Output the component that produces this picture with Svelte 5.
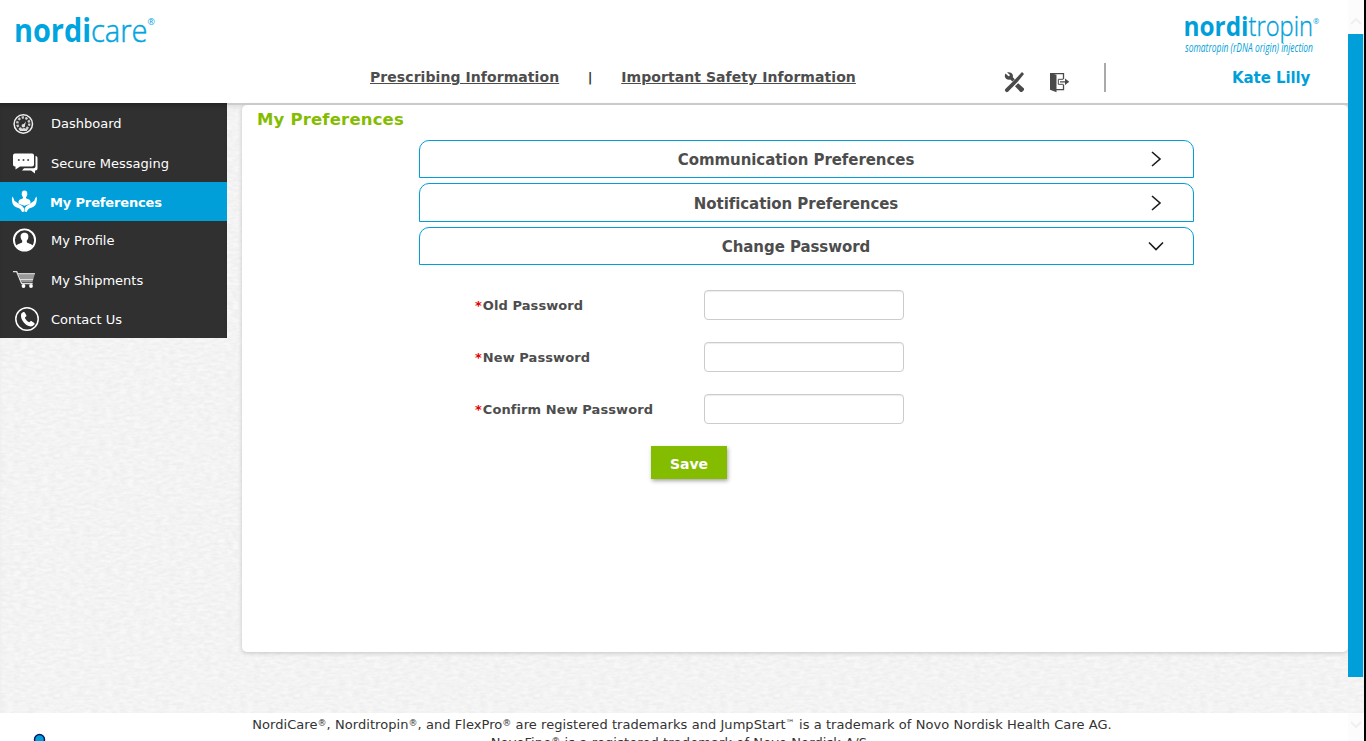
<script>
  const nav = [
    { id: 'dashboard', label: 'Dashboard' },
    { id: 'messaging', label: 'Secure Messaging' },
    { id: 'preferences', label: 'My Preferences' },
    { id: 'profile', label: 'My Profile' },
    { id: 'shipments', label: 'My Shipments' },
    { id: 'contact', label: 'Contact Us' }
  ];
  const fields = ['Old Password', 'New Password', 'Confirm New Password'];
  let active = $state('preferences');
  let open = $state('Change Password');
  const sections = ['Communication Preferences', 'Notification Preferences', 'Change Password'];
</script>

<div class="page">
  <header>
    <svg class="brand" width="160" height="60" viewBox="0 0 160 60">
      <g fill="#00a5df" font-family="Open Sans, sans-serif">
        <text x="14" y="42" font-size="31.500" font-weight="700" textLength="77" lengthAdjust="spacingAndGlyphs">nordi</text>
        <text x="91" y="42" font-size="31.500" font-weight="300" stroke="#00a5df" stroke-width=".5" textLength="56.500" lengthAdjust="spacingAndGlyphs">care</text>
        <text x="147.500" y="25" font-size="9">®</text>
      </g>
    </svg>
    <div class="links">
      <a href="#pi">Prescribing Information</a>
      <span class="bar">|</span>
      <a href="#isi">Important Safety Information</a>
    </div>
    <div class="tools">
      <svg width="22" height="22" viewBox="1003 71 22 22">
        <path d="M1005.5 73.600l3 2.700 1-.4.300-1.200-2.700-2.200c2.200-.7 4.600.2 5.500 2 .5 1 .5 1.900.2 2.800l2 2-2.300 2.300-2.300-2.200c-2 .8-4.800-.5-5.300-2.700-.2-.8 0-2 .6-3.100z" fill="#4a4a4a" />
        <path d="M1022 72l2 1.900-6.500 8.200-9.500 9.700-1.600.4-1.600-1.600.5-1.500 9.700-9.500z" fill="#4a4a4a" />
        <path d="M1015 86.200l3.200-3 5.800 5.300v1.600l-2 2h-1.600z" fill="#4a4a4a" />
      </svg>
      <svg class="exit" width="22" height="22" viewBox="1049 71 22 22">
        <path d="M1050 73l6.500 1.700v17.500l-6.500-2.500z" fill="#4a4a4a" />
        <path d="M1050 73.700h13.500v5.300M1063.500 84.500v5.200H1056" fill="none" stroke="#4a4a4a" stroke-width="1.300" />
        <path d="M1063.300 79.300h-5v5h5" fill="none" stroke="#4a4a4a" stroke-width="1" />
        <path d="M1060 81.200h5v-2.700l4.300 3.300-4.300 3.300v-2.700h-5z" fill="#4a4a4a" />
      </svg>
      <i class="divider"></i>
    </div>
    <div class="account">
      <svg width="140" height="50" viewBox="1182 10 140 50">
        <g fill="#009fda" font-family="Open Sans, sans-serif">
          <text x="1183.500" y="36" font-size="27" font-weight="700" textLength="65" lengthAdjust="spacingAndGlyphs">nordi</text>
          <text x="1248.500" y="36" font-size="27" font-weight="300" stroke="#009fda" stroke-width=".35" textLength="64.500" lengthAdjust="spacingAndGlyphs">tropin</text>
          <text x="1313" y="24" font-size="7.500">®</text>
          <text x="1185" y="52" font-size="13" font-style="italic" textLength="128" lengthAdjust="spacingAndGlyphs">somatropin (rDNA origin) injection</text>
        </g>
      </svg>
      <b>Kate Lilly</b>
    </div>
  </header>

  <div class="body">
    <nav>
      {#each nav as item, i}
        <button class:active={active === item.id} onclick={() => (active = item.id)}>
          <svg width="51" height="39" viewBox="0 {i === 0 ? 103.500 : 104 + i * 39} 51 39" fill="#fff">
            {#if item.id === 'dashboard'}
              <circle cx="23.300" cy="123.500" r="9.200" fill="none" stroke="#eee" stroke-width="1.500" />
              <circle cx="23.300" cy="123" r="6" fill="none" stroke="#ccc" stroke-width="2.400" stroke-dasharray="2.300 1.400" />
              <path d="M22 125.500l4-4.500-1.500 5.500zM18.500 128h9.700l-1.500 2.500h-6.700z" fill="#ddd" />
              <circle cx="23.300" cy="125.300" r="1.700" fill="#ddd" />
            {:else if item.id === 'messaging'}
              <path d="M15 153.500h17a2 2 0 0 1 2 2v9a2 2 0 0 1-2 2H20l-4.500 3v-3H15a2 2 0 0 1-2-2v-9a2 2 0 0 1 2-2z" />
              <path d="M35.500 156a2 2 0 0 1 2 2v10.500a2 2 0 0 1-2 2h-.5v3l-4-3h-9l2-2.200h9.500a2 2 0 0 0 2-2z" />
              <g fill="#444"><circle cx="18.800" cy="160" r="1" /><circle cx="23.500" cy="160" r="1" /><circle cx="28.200" cy="160" r="1" /></g>
            {:else if item.id === 'preferences'}
              <ellipse cx="24.500" cy="194" rx="2.800" ry="3.400" />
              <path d="M23 196h3v2.300l3.500 1.500q1.200.7 1 3.700-3 1.200-6 2.300-3-1.100-6-2.300-.2-3 1-3.700l3.500-1.500z" />
              <path d="M12 196.500q1.600.7 2.400 4.200l5 3.500q3.300 1.300 4.600 4l.2 3.300-2.200.5q-1-3.500-4.500-4.300-4-1.200-5-4.500-1-3-.5-6.700zM36.700 196.500q-1.600.7-2.400 4.200l-5 3.500q-3.300 1.300-4.600 4l-.2 3.300 2.200.5q1-3.500 4.500-4.300 4-1.200 5-4.500 1-3 .5-6.700z" />
            {:else if item.id === 'profile'}
              <circle cx="24.500" cy="240" r="10.600" fill="none" stroke="#fff" stroke-width="1.900" />
              <path d="M24.500 232.800c3.200 0 4.200 2.200 3.800 4.700-.2 1.500-.8 2.400-1.500 3v1.700c1 1.300 4.700 1.200 5.900 3.600-3.900 5.800-12.500 5.800-16.400 0 1.200-2.400 4.900-2.300 5.900-3.600v-1.700c-.7-.6-1.300-1.500-1.500-3-.4-2.500.6-4.700 3.800-4.700z" />
            {:else if item.id === 'shipments'}
              <path d="M13 271.700h3.700l5 11.800h11" fill="none" stroke="#ddd" stroke-width="1.300" />
              <path d="M18 273.300h17l-2.500 8.700H21.500z" fill="#999" />
              <path d="M18 273.700h17M19.500 279.500h13.500" stroke="#ddd" stroke-width="1" />
              <circle cx="23.500" cy="286" r="1.900" /><circle cx="31" cy="286" r="1.900" />
            {:else}
              <circle cx="27" cy="319" r="11.200" fill="none" stroke="#fff" stroke-width="1.500" />
              <path d="M21.300 313.500l2-1.500c.7-.3 1.200 0 1.500.5l1.500 2.800c.3.700 0 1.200-.5 1.500l-1 .8c.7 2.200 2.300 3.900 4.400 4.700l1-.9c.4-.4 1-.5 1.500-.2l2.500 1.700c.6.500.6 1 .2 1.500l-1.700 1.700c-5.600 2-13.400-6.300-11.400-12.600z" />
            {/if}
          </svg>
          <span>{item.label}</span>
        </button>
      {/each}
    </nav>

    <main>
      <h1>My Preferences</h1>
      <div class="sections">
        {#each sections as name}
          <button class="section" onclick={() => (open = name)}>
            <span>{name}</span>
            <svg width="16" height="16" viewBox="0 0 16 16" fill="none" stroke="#1a1a1a" stroke-width="1.600">
              {#if open === name}
                <path d="M1 4.500l7 7 7-7" />
              {:else}
                <path d="M4 1l8 7-8 7" />
              {/if}
            </svg>
          </button>
        {/each}
      </div>
      <form>
        {#each fields as name, i}
          <label for="f{i}"><em>*</em>{name}</label>
          <input id="f{i}" type="password" />
        {/each}
      </form>
      <button class="save">Save</button>
    </main>
  </div>

  <footer>
    <svg class="badge" width="14" height="8" viewBox="0 0 14 8"><circle cx="7.500" cy="6.500" r="5" fill="#009fda" stroke="#001965" stroke-width="1.400" /></svg>
    <p>NordiCare<s>®</s>, Norditropin<s>®</s>, and FlexPro<s>®</s> are registered trademarks and JumpStart<s>™</s> is a trademark of Novo Nordisk Health Care AG.</p>
    <p class="second">NovoFine<s>®</s> is a registered trademark of Novo Nordisk A/S.</p>
  </footer>

  <div class="scroll">
    <div class="cap"><svg width="16" height="34" viewBox="0 0 16 34"><path d="M3 24l5-5 5 5" fill="none" stroke="#f0f0f0" stroke-width="2" /></svg></div>
    <div class="thumb"></div>
    <div class="gap"></div>
    <div class="cap end"><svg width="16" height="28" viewBox="0 0 16 28"><path d="M3 9l5 5 5-5" fill="none" stroke="#f0f0f0" stroke-width="2" /></svg></div>
  </div>
</div>

<style>
  :global(body) { background: #fff; overflow: hidden; }
  .page {
    position: relative;
    width: 1366px;
    height: 741px;
    overflow: hidden;
    display: flex;
    flex-direction: column;
    font-family: Verdana, "DejaVu Sans", sans-serif;
    color: #4d4d4d;
  }
  button { font-family: inherit; border: 0; padding: 0; margin: 0; cursor: pointer; }
  header {
    height: 103px;
    flex: none;
    display: grid;
    grid-template-columns: 370px 634px 178px 1fr;
    background: #fff;
  }
  header svg { overflow: visible; }
  .brand { display: block; }
  .links {
    display: flex;
    padding-top: 68px;
    font-size: 14px;
    line-height: 18px;
    font-weight: bold;
    letter-spacing: .07px;
    white-space: nowrap;
  }
  .links a { color: #4d4d4d; text-decoration: underline; text-underline-offset: 1px; text-decoration-thickness: 1px; }
  .bar { width: 62px; text-align: center; color: #333; font-size: 13px; line-height: 20px; }
  .tools { display: flex; padding: 71px 0 0; }
  .tools svg { margin-right: 23px; margin-left: -1px; }
  .tools svg.exit { margin: 0 21px 0 1px; }
  .divider { width: 2px; height: 29px; margin: -8px 0 0 12px; background: #aaa; }
  .account { padding-top: 10px; display: flex; flex-direction: column; }
  .account svg { flex: none; }
  .account b { margin: 8px 0 0 50px; font-size: 15px; line-height: 20px; letter-spacing: -.08px; color: #009fda; }
  .body {
    height: 610px;
    flex: none;
    display: flex;
    align-items: flex-start;
    background: #f4f4f4 url("data:image/svg+xml,%3Csvg xmlns='http://www.w3.org/2000/svg' width='240' height='240'%3E%3Cfilter id='n' x='0' y='0' width='100%25' height='100%25' color-interpolation-filters='sRGB'%3E%3CfeTurbulence type='fractalNoise' baseFrequency='.14 .35' numOctaves='3' seed='4' stitchTiles='stitch'/%3E%3CfeColorMatrix values='.07 0 0 0 .918 .07 0 0 0 .918 .07 0 0 0 .918 0 0 0 0 1'/%3E%3C/filter%3E%3Crect width='240' height='240' filter='url(%23n)'/%3E%3C/svg%3E");
    box-shadow: inset 0 2px 0 #ccc, inset 0 6px 5px -2px #ddd;
  }
  nav { width: 227px; flex: none; background: #303030; box-shadow: inset 0 5px 5px -3px #222; }
  nav button {
    width: 227px;
    height: 39px;
    display: flex;
    align-items: center;
    background: none;
    color: #fff;
    font-size: 13px;
    line-height: 18px;
    white-space: nowrap;
  }
  nav button:first-child { height: 40px; }
  nav button svg { flex: none; }
  nav button.active { background: #009fda; font-weight: bold; letter-spacing: -.15px; }
  nav button:nth-child(1) span, nav button:nth-child(2) span { padding-top: 2px; }
  nav button:nth-child(3) span { padding-top: 3px; margin-left: -1px; }
  nav button:nth-child(5) span, nav button:nth-child(6) span { padding-top: 3px; }
  main {
    width: 1106px;
    height: 547px;
    box-sizing: border-box;
    margin: 2px 0 0 15px;
    background: #fff;
    border-radius: 5px;
    box-shadow: 0 1px 4px #c4c4c4;
  }
  h1 { margin: 0; padding: 4px 0 0 15px; font-size: 16.500px; line-height: 22px; letter-spacing: .17px; color: #84bd00; }
  .sections { display: grid; grid-template-rows: 38px 39px 38px; gap: 5px; width: 775px; margin: 9px 0 0 177px; }
  .section {
    display: grid;
    grid-template-columns: 728px 16px;
    align-items: center;
    border: 1px solid #009fda;
    border-radius: 10px 10px 0 0;
    background: #fff;
    color: #4d4d4d;
    font-size: 15px;
    font-weight: bold;
    letter-spacing: -.06px;
  }
  .section span { padding: 2px 0 0 24px; line-height: 20px; }
  form {
    display: grid;
    grid-template-columns: 229px 200px;
    grid-auto-rows: 30px;
    row-gap: 22px;
    align-items: center;
    margin: 25px 0 0 233px;
    font-size: 13px;
    font-weight: bold;
    letter-spacing: .08px;
  }
  em { color: #e60000; font-style: normal; letter-spacing: 0; margin-right: 1px; }
  input {
    width: 200px;
    height: 30px;
    box-sizing: border-box;
    border: 1px solid #ccc;
    border-radius: 4px;
    background: #fff;
    box-shadow: inset 0 1px 1px rgba(0, 0, 0, .075);
  }
  .save {
    display: block;
    width: 76px;
    height: 33px;
    margin: 22px 0 0 409px;
    padding-top: 2px;
    background: #84bd00;
    color: #fff;
    font-size: 14px;
    font-weight: bold;
    box-shadow: 1px 2px 4px rgba(0, 0, 0, .35);
  }
  footer { position: relative; height: 28px; width: 1364px; background: #fff; overflow: hidden; text-align: center; font-size: 13px; color: #333; }
  footer p { margin: 3px 0 0; line-height: 18px; letter-spacing: .06px; white-space: nowrap; }
  footer p.second { margin-top: 0; padding-right: 2px; letter-spacing: .1px; }
  footer s { text-decoration: none; font-size: 9px; line-height: 1px; position: relative; top: -3px; }
  .badge { position: absolute; left: 32px; top: 20px; }
  .scroll {
    position: absolute;
    right: 0;
    top: 0;
    width: 16px;
    height: 741px;
    display: flex;
    flex-direction: column;
    border-right: 2px solid #000;
  }
  .cap { height: 34px; background: #fcfcfc; }
  .cap svg { display: block; }
  .thumb { height: 643px; box-sizing: border-box; background: #009fda; border-right: 1px solid #cde8f4; }
  .gap { height: 36px; }
  .cap.end { height: 28px; }
</style>
